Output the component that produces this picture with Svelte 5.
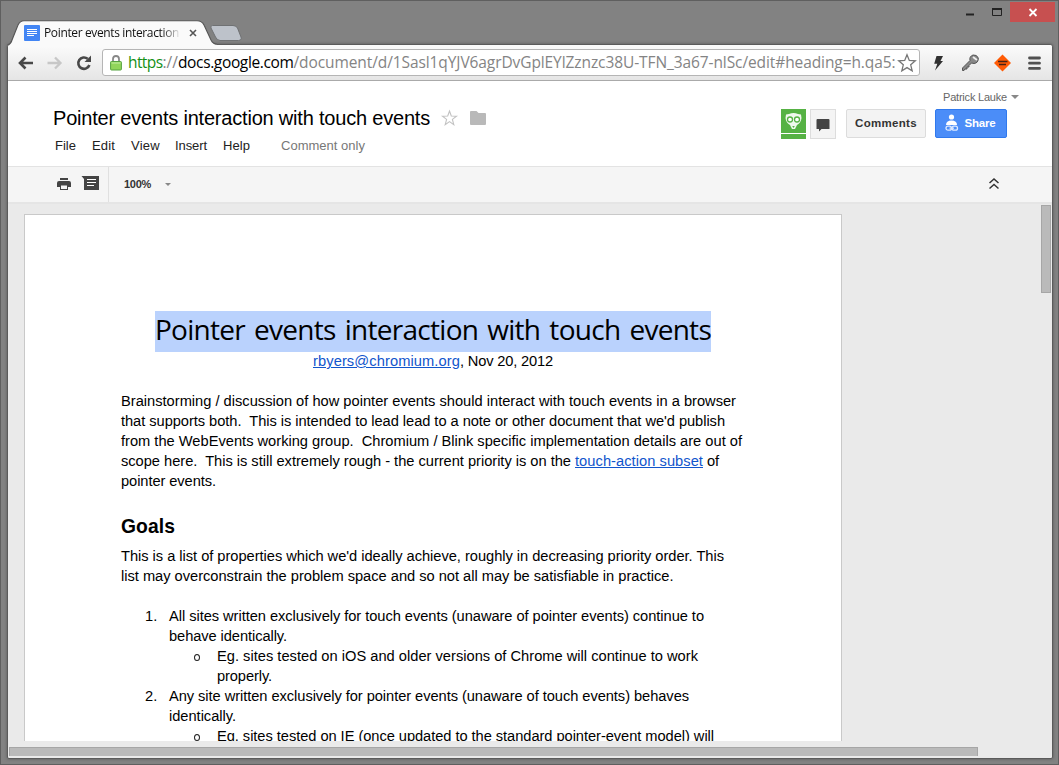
<script>
  // Tracks each text run so that it occupies its measured width.
  function fit(node, width) {
    const apply = () => {
      node.style.letterSpacing = '0px';
      const natural = node.getBoundingClientRect().width;
      node.style.letterSpacing = (width - natural) / node.textContent.length + 'px';
    };
    apply();
    document.fonts?.ready.then(apply);
  }

  const menus = [['File', 21, 16], ['Edit', 23, 16], ['View', 29, 15], ['Insert', 32, 16], ['Help', 27, 31]];
  const intro = [
    ['Brainstorming / discussion of how pointer events should interact with touch events in a browser', 615],
    ["that supports both.  This is intended to lead lead to a note or other document that we'd publish", 604],
    ['from the WebEvents working group.  Chromium / Blink specific implementation details are out of', 621]
  ];
  const goals = [
    ["This is a list of properties which we'd ideally achieve, roughly in decreasing priority order. This", 603],
    ['list may overconstrain the problem space and so not all may be satisfiable in practice.', 552.5]
  ];
  const items = [
    {
      n: '1.',
      lines: [['All sites written exclusively for touch events (unaware of pointer events) continue to', 535], ['behave identically.', 118]],
      sub: [['Eg. sites tested on iOS and older versions of Chrome will continue to work', 481], ['properly.', 55]]
    },
    {
      n: '2.',
      lines: [['Any site written exclusively for pointer events (unaware of touch events) behaves', 520], ['identically.', 67]],
      sub: [['Eg. sites tested on IE (once updated to the standard pointer-event model) will', 497]]
    }
  ];
</script>

{#snippet run(text, width, cls = '')}<span class="run {cls}" use:fit={width}>{text}</span>{/snippet}

<div class="desktop">
  <div class="strip">
    <div class="tab">
      <svg class="tabshape" width="260" height="26" viewBox="0 0 260 26">
        <path d="M0 26V25.5Q4 24 5 20L11 5Q13 .8 17 .8H190Q195 .8 197 5L204 20Q206 24.5 210 24.5V26Z" fill="#fafafa" />
        <path d="M0 25.5Q4 24 5 20L11 5Q13 .8 17 .8H190Q195 .8 197 5L204 20Q206 24 210 24.2" fill="none" stroke="#555" stroke-width="1.1" />
        <path d="M205.5 5.5H226Q229 5.5 230.5 8L234 17Q235 20 231.5 20.5H213Q210 20.3 208.5 17L204 8Q203 5.8 205.5 5.5Z" fill="#bdc2ca" stroke="#6f7173" />
      </svg>
      <div class="tabcontent">
        <svg width="16" height="16" viewBox="0 0 16 16"><rect width="16" height="16" rx="1" fill="#4285f4" /><path d="M3 4.5H13M3 6.5H13M3 8.500H13M3 10.500H10" stroke="#fff" stroke-width="1.1" /></svg>
        <div class="tabtitle">{@render run('Pointer events interaction', 135)}</div>
        <svg width="8" height="8" viewBox="0 0 8 8"><path d="M1 1 7 7M7 1 1 7" stroke="#555" stroke-width="1.6" /></svg>
      </div>
    </div>
    <div class="controls">
      <svg width="90" height="20" viewBox="0 0 90 20">
        <path d="M0 12.5H8" stroke="#222" stroke-width="2" />
        <path d="M26.500 6.500H35.500V13.500H26.500Z" fill="none" stroke="#222" />
        <path d="M26 7H36" stroke="#222" stroke-width="2" />
        <path d="M44 0H89V20H44Z" fill="#c75050" />
        <path d="M63.5 7 70.5 14M70.5 7 63.5 14" stroke="#fff" stroke-width="1.8" />
      </svg>
    </div>
  </div>

  <div class="window">
    <div class="toolbar">
      <svg width="86" height="24" viewBox="0 0 86 24" fill="none">
        <path d="M18 12H5M10.500 6.500 5 12 10.500 17.500" stroke="#484848" stroke-width="2.6" />
        <path d="M32.500 12H45.500M40 6.500 45.500 12 40 17.500" stroke="#c7c7c7" stroke-width="2.3" />
        <path d="M74.400 14A5.700 5.700 0 1 1 72.700 7.800" stroke="#484848" stroke-width="2.6" />
        <path d="M76 4.500V11H69.500Z" fill="#484848" />
      </svg>
      <div class="omnibox">
        <svg class="lock" width="12" height="16" viewBox="0 0 12 16"><path d="M3 7V4Q3 1 6 1T9 4V7" fill="none" stroke="#888" stroke-width="1.8" /><rect x=".6" y="6.5" width="10.8" height="8.5" rx=".8" fill="#91d55b" stroke="#55a241" /><path d="M1.5 8H10.5" stroke="#c5efa5" /></svg>
        <div class="url">{@render run('https', 34.5, 'secure')}{@render run('://', 15.5, 'grey')}{@render run('docs.google.com', 115.5, 'host')}{@render run('/document/d/1Sasl1qYJV6agrDvGplEYlZznzc38U-TFN_3a67-nlSc/edit#heading=h.qa5:', 602, 'grey')}</div>
        <svg width="20" height="20" viewBox="0 0 20 20"><path d="M10 1.7 12.3 7.4 18.3 7.8 13.7 11.8 15.2 17.8 10 14.6 4.8 17.8 6.3 11.8 1.7 7.8 7.7 7.4Z" fill="#fff" stroke="#777" stroke-width="1.3" /></svg>
      </div>
      <svg width="132" height="24" viewBox="0 0 132 24">
        <path d="M16.500 5H23L20.5 10H23L15 19.500 17.3 12.8H14.2Z" fill="#303030" />
        <path d="M42.500 19.500V17L50 9.500Q49 5.500 53 4Q57 3.500 58.300 7Q58.500 12 54 12.500L51.500 12 49 14.500V16H47V18H45L44 19.500Z" fill="#888" stroke="#555" />
        <path d="M53 6 57 9" stroke="#eee" stroke-width="1.8" />
        <path d="M82.500 3.500 91 12 82.500 20.500 74 12Z" fill="#ff5b05" />
        <path d="M78 10.500H87.500M79 13.500H86" stroke="#482315" stroke-width="1.600" />
        <path d="M109.500 7H119.500M109.500 12.200H119.500M109.500 17.400H119.500" stroke="#505050" stroke-width="2.8" stroke-linecap="round" />
      </svg>
    </div>

    <header>
      <div class="heading">
        <div class="name">
          {@render run('Pointer events interaction with touch events', 377)}
          <svg width="46" height="18" viewBox="0 0 46 18"><path d="M9.500 2 11.300 7 16.500 7.200 12.400 10.400 13.800 15.600 9.500 12.600 5.200 15.600 6.600 10.400 2.500 7.200 7.700 7Z" fill="none" stroke="#c2c2c2" stroke-width="1.100" /><path d="M30 3Q30 2 31 2H36.500L38.500 4H45Q46 4 46 5V15Q46 16 45 16H31Q30 16 30 15Z" fill="#b9b9b9" /></svg>
        </div>
        <nav>
          {#each menus as [label, w, gap]}<span class="menu" style="margin-right:{gap}px">{@render run(label, w)}</span>{/each}
          {@render run('Comment only', 84, 'mode')}
        </nav>
      </div>
      <div class="account">
        <div class="user">{@render run('Patrick Lauke', 64)}<i class="caret"></i></div>
        <div class="buttons">
          <svg class="avatar" width="25" height="30" viewBox="0 0 25 30"><path d="M0 0H25V24H0Z" fill="#56b244" /><path d="M0 25H25V30H0Z" fill="#56b244" /><path d="M5 5.500 8 5Q12.500 3 17 5L20 5.500 20.500 9Q20 14 16 16L14 20H11L9 16Q5 14 4.500 9Z" fill="#eff8ed" /><g fill="#fff" stroke="#56b244" stroke-width="1.300"><circle cx="9" cy="10.500" r="2.500" /><circle cx="16" cy="10.500" r="2.500" /></g><path d="M11.200 17H13.800L12.500 19Z" fill="#56b244" /></svg>
          <div class="chat"><svg width="14" height="14" viewBox="0 0 14 14"><path d="M1.500 1H12.500Q13.500 1 13.500 2V11H5.500L3 13.500V11H.5V2Q.5 1 1.500 1Z" fill="#444" /></svg></div>
          <div class="button">{@render run('Comments', 62)}</div>
          <div class="button share"><svg width="14" height="18" viewBox="0 0 14 18"><circle cx="6.500" cy="3" r="2.600" fill="#fff" /><path d="M1 11Q1 6.500 6.500 6.500T12 11Z" fill="#fff" /><g fill="none" stroke="#dce9ff" stroke-width="1.300"><rect x="1" y="12.200" width="5.500" height="4" rx="2" /><rect x="7" y="12.200" width="5.500" height="4" rx="2" /><path d="M4.500 14.200H9" /></g></svg>{@render run('Share', 31)}</div>
        </div>
      </div>
    </header>

    <div class="actions">
      <div class="tools">
        <svg width="44" height="18" viewBox="0 0 44 18"><path d="M3 3H11V5H3ZM2 6H12Q14 6 14 8V12H0V8Q0 6 2 6ZM3 11H11V15H3Z" fill="#444" /><path d="M4 10.500H10V14H4Z" fill="#f5f5f5" /><path d="M24.500 1H42V15H27V4Z" fill="#444" /><path d="M30 4.500H39M30 7.500H39M30 10.500H37" stroke="#fff" /></svg>
      </div>
      <div class="zoom">{@render run('100%', 27)}<i class="caret small"></i></div>
      <svg class="collapse" width="12" height="14" viewBox="0 0 12 14"><path d="M1.500 6 6 2 10.500 6M1.500 11.500 6 7.500 10.500 11.500" fill="none" stroke="#333" stroke-width="1.500" /></svg>
    </div>

    <div class="editor">
      <main>
        <h1>{@render run('Pointer events interaction with touch events', 556)}</h1>
        <div class="line byline">{@render run('rbyers@chromium.org', 147, 'link')}{@render run(', Nov 20, 2012', 93)}</div>
        <section class="intro">
          {#each intro as [text, w]}<div class="line">{@render run(text, w)}</div>{/each}
          <div class="line">{@render run('scope here.  This is still extremely rough - the current priority is on the ', 454)}{@render run('touch-action subset', 128, 'link')}{@render run(' of', 16)}</div>
          <div class="line">{@render run('pointer events.', 95)}</div>
        </section>
        <h2>{@render run('Goals', 54)}</h2>
        <section>
          {#each goals as [text, w]}<div class="line">{@render run(text, w)}</div>{/each}
        </section>
        <section class="list">
          {#each items as item}
            <div class="item">
              <span class="marker">{item.n}</span>
              <div>
                {#each item.lines as [text, w]}<div class="line">{@render run(text, w)}</div>{/each}
                <div class="item sub">
                  <i class="bullet"></i>
                  <div>{#each item.sub as [text, w]}<div class="line">{@render run(text, w)}</div>{/each}</div>
                </div>
              </div>
            </div>
          {/each}
        </section>
      </main>
      <div class="vthumb"></div>
    </div>
    <div class="hscroll"><div class="hthumb"></div></div>
  </div>
</div>

<style>
  :global(body) { margin: 0; overflow: hidden; }
  * { box-sizing: border-box; }
  svg { display: block; flex: none; }
  .desktop { width: 1059px; height: 765px; background: #828282; border: 1px solid #5f5f5f; font-family: "Liberation Sans", Arial, sans-serif; padding: 0 6px; }
  .run { display: inline-block; white-space: pre; flex: none; }
  .strip { height: 43px; display: flex; justify-content: space-between; }
  .tab { position: relative; width: 260px; padding-top: 19px; }
  .tabshape { position: absolute; left: 0; top: 19px; z-index: 1; }
  .tabcontent { position: relative; z-index: 2; display: flex; align-items: center; height: 26px; padding-left: 17px; font: 12px "Open Sans", sans-serif; color: #111; }
  .tabtitle { width: 137px; margin: 0 8px 0 4px; height: 18px; line-height: 17px; -webkit-mask-image: linear-gradient(90deg, #000 86%, transparent); mask-image: linear-gradient(90deg, #000 86%, transparent); }
  .controls { margin-right: -4px; padding-top: 1px; }
  .window { width: 1046px; height: 715px; border: 1px solid #5b5b5b; border-radius: 3px 3px 2px 2px; background: #eaeaea; box-shadow: 0 0 3px #555; overflow: hidden; }
  .toolbar { height: 36px; display: flex; align-items: center; padding-left: 7px; background: linear-gradient(#fbfbfb, #e5e5e5); border-bottom: 1px solid #aaa; }
  .toolbar > svg:first-child { margin-right: 1px; }
  .omnibox { width: 818px; height: 27px; background: #fff; border: 1px solid #b5b5b5; border-radius: 3px; display: flex; align-items: center; padding-left: 7px; }
  .lock { margin-right: 6px; }
  .url { display: flex; width: 769px; height: 25px; line-height: 24px; font-family: "Open Sans", sans-serif; font-size: 15.5px; }
  .secure { color: #149016; } .grey { color: #848484; } .host { color: #000; }
  header { height: 85px; background: #fff; display: flex; justify-content: space-between; padding-left: 45px; }
  .heading { padding-top: 25px; }
  .name { display: flex; align-items: center; height: 24px; font-size: 20px; gap: 10px; }
  nav { display: flex; margin: 6px 0 0 2px; font-size: 13px; line-height: 20px; color: #222; }
  .mode { color: #777; }
  .account { width: 271px; padding-top: 8px; }
  .user { display: flex; align-items: center; height: 16px; margin-left: 162px; gap: 4px; font-size: 11px; color: #666; }
  .caret { width: 0; height: 0; border: 4px solid transparent; border-top-color: #888; border-bottom: 0; }
  .small { border-width: 3px; border-bottom: 0; }
  .buttons { display: flex; margin-top: 4px; }
  .chat { width: 26px; height: 30px; margin: 0 10px 0 4px; border: 1px solid #ddd; background: #f4f4f4; display: flex; align-items: center; justify-content: center; padding-top: 2px; }
  .button { width: 80px; height: 29px; display: flex; align-items: center; justify-content: center; border: 1px solid #dcdcdc; border-radius: 2px; background: #f3f3f3; font-size: 11.5px; font-weight: bold; color: #333; padding-bottom: 1px; }
  .share { width: 72px; margin-left: 9px; background: #4b8df8; border-color: #3079ed; color: #fff; gap: 6px; padding: 0 2px 1px 0; }
  .actions { height: 38px; display: flex; align-items: center; background: #f5f5f5; border-top: 1px solid #e3e3e3; border-bottom: 2px solid #e5e5e5; padding-bottom: 1px; }
  .tools { width: 101px; height: 35px; margin-bottom: -1px; padding: 8px 0 0 49px; border-right: 1px solid #e0e0e0; }
  .zoom { display: flex; align-items: center; gap: 14px; margin-left: 15px; width: 50px; font-size: 11px; font-weight: bold; color: #333; }
  .collapse { margin-left: 814px; }
  .editor { height: 537px; display: flex; justify-content: space-between; padding: 10px 1px 0 16px; overflow: hidden; }
  main { width: 818px; height: 527px; overflow: hidden; background: #fff; border: 1px solid #c9c9c9; border-bottom: 0; padding: 96px 96px 0; font-size: 14.67px; color: #000; }
  h1 { margin: 0 auto; width: 556px; height: 41px; background: #bad2fd; font: 28px/37px "Open Sans", sans-serif; word-spacing: 2.5px; }
  .line { height: 20px; line-height: 20px; display: flex; }
  .byline { justify-content: center; line-height: 18px; }
  .link { color: #1155cc; text-decoration: underline; }
  .intro { margin-top: 19px; }
  h2 { margin: 23px 0 6px; font-size: 19.3px; line-height: 26px; height: 26px; }
  .list { margin-top: 20px; }
  .item { display: flex; }
  .marker { width: 48px; padding-left: 24px; line-height: 20px; flex: none; }
  .bullet { width: 6px; height: 7px; border: 1px solid #222; border-radius: 50%; margin: 8px 17px 0 25px; flex: none; }
  .vthumb { width: 10px; height: 88px; margin-top: -9px; background: #bababa; border: 1px solid #a6a6a6; }
  .hscroll { height: 17px; padding: 6px 0 0 1px; }
  .hthumb { width: 969px; height: 9px; background: #bababa; border: 1px solid #a6a6a6; border-bottom: 0; }
</style>
